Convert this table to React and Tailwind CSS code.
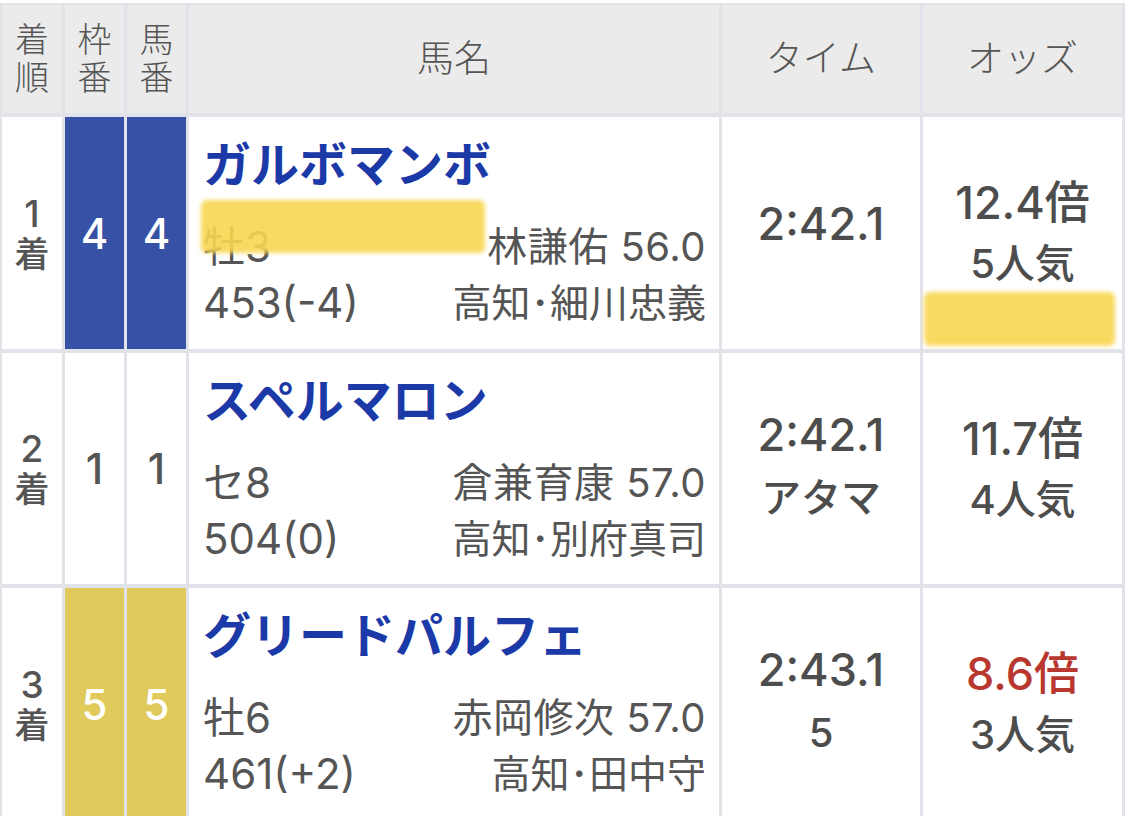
import * as React from "react"

const rows = [
    {
        rank: "1",
        waku: "4",
        umaban: "4",
        frame: "bg-[#3651a5] text-white",
        name: "ガルボマンボ",
        sexAge: "牡3",
        weight: "453(-4)",
        jockey: "林謙佑 56.0",
        trainer: "高知･細川忠義",
        time: "2:42.1",
        margin: "",
        odds: "12.4倍",
        pop: "5人気",
        hot: false,
        mark: true,
    },
    {
        rank: "2",
        waku: "1",
        umaban: "1",
        frame: "bg-white text-[#555555]",
        name: "スペルマロン",
        sexAge: "セ8",
        weight: "504(0)",
        jockey: "倉兼育康 57.0",
        trainer: "高知･別府真司",
        time: "2:42.1",
        margin: "アタマ",
        odds: "11.7倍",
        pop: "4人気",
        hot: false,
        mark: false,
    },
    {
        rank: "3",
        waku: "5",
        umaban: "5",
        frame: "bg-[#dfca5b] text-white",
        name: "グリードパルフェ",
        sexAge: "牡6",
        weight: "461(+2)",
        jockey: "赤岡修次 57.0",
        trainer: "高知･田中守",
        time: "2:43.1",
        margin: "5",
        odds: "8.6倍",
        pop: "3人気",
        hot: true,
        mark: false,
    },
]

function Marker({ className }) {
    // highlighter strokes laid over the screenshot
    return <div className={`absolute rounded-[6px] bg-[#f8d650] opacity-90 blur-[2px] ${className}`} />
}

function HeadStack({ top, bottom }) {
    return (
        <div className="bg-[#ebebeb] flex flex-col items-center justify-center text-[34px] leading-[38px] font-light text-[#555555]">
            <span>{top}</span>
            <span>{bottom}</span>
        </div>
    )
}

function ResultRow({ r }) {
    return (
        <>
            <div className="bg-white flex flex-col items-center justify-center font-medium text-[#555555]">
                <span className="text-[37px] leading-[41px]">{r.rank}</span>
                <span className="text-[35px] leading-[40px]">着</span>
            </div>
            <div className={`flex items-center justify-center text-[42px] font-medium ${r.frame}`}>{r.waku}</div>
            <div className={`flex items-center justify-center text-[42px] font-medium ${r.frame}`}>{r.umaban}</div>
            <div className="relative bg-white pt-[20px] pl-[14px] pr-[13px]">
                <div className="text-[48px] leading-[56px] font-bold text-[#1b3aa8] whitespace-nowrap">{r.name}</div>
                <div className="mt-[26px] flex justify-between items-center leading-[56px] text-[#555555]">
                    <span className="text-[42px]">{r.sexAge}</span>
                    <span className="text-[40px] tracking-[0.5px]">{r.jockey}</span>
                </div>
                <div className="flex justify-between items-center leading-[56px] text-[#555555]">
                    <span className="text-[42px]">{r.weight}</span>
                    <span className="text-[39px]">{r.trainer}</span>
                </div>
                {r.mark && <Marker className="left-[12px] top-[83px] w-[284px] h-[53px]" />}
            </div>
            <div className={`bg-white flex flex-col items-center justify-center font-medium text-[#4d4d4d] ${r.margin ? "pb-[6px]" : "pb-[20px]"}`}>
                <span className="text-[45px] leading-[63px]">{r.time}</span>
                {r.margin && <span className="text-[40px] leading-[63px]">{r.margin}</span>}
            </div>
            <div className="relative bg-white flex flex-col items-center justify-center font-medium">
                <span className={`text-[45px] leading-[61px] ${r.hot ? "text-[#b8372f]" : "text-[#4d4d4d]"}`}>{r.odds}</span>
                <span className="text-[40px] leading-[61px] text-[#4d4d4d]">{r.pop}</span>
                {r.mark && <Marker className="left-[1px] top-[175px] w-[191px] h-[54px]" />}
            </div>
        </>
    )
}

export default function App() {
    return (
        <div className="w-[1125px] h-[816px] overflow-hidden bg-white pt-[3px] font-['Inter','Noto_Sans_CJK_JP',sans-serif]">
            <div className="bg-[#e2e2e9] pt-[2px] pl-[2px] pr-[3px] grid grid-cols-[60px_59px_59px_530px_198px_199px] grid-rows-[108px_232px_231px_232px] gap-x-[3px] gap-y-[4px]">
                <HeadStack top="着" bottom="順" />
                <HeadStack top="枠" bottom="番" />
                <HeadStack top="馬" bottom="番" />
                <div className="bg-[#ebebeb] flex items-center justify-center text-[37px] font-light text-[#555555]">馬名</div>
                <div className="bg-[#ebebeb] flex items-center justify-center text-[37px] font-light text-[#555555]">タイム</div>
                <div className="bg-[#ebebeb] flex items-center justify-center text-[37px] font-light text-[#555555]">オッズ</div>
                {rows.map((r) => (
                    <ResultRow key={r.rank} r={r} />
                ))}
            </div>
        </div>
    )
}
